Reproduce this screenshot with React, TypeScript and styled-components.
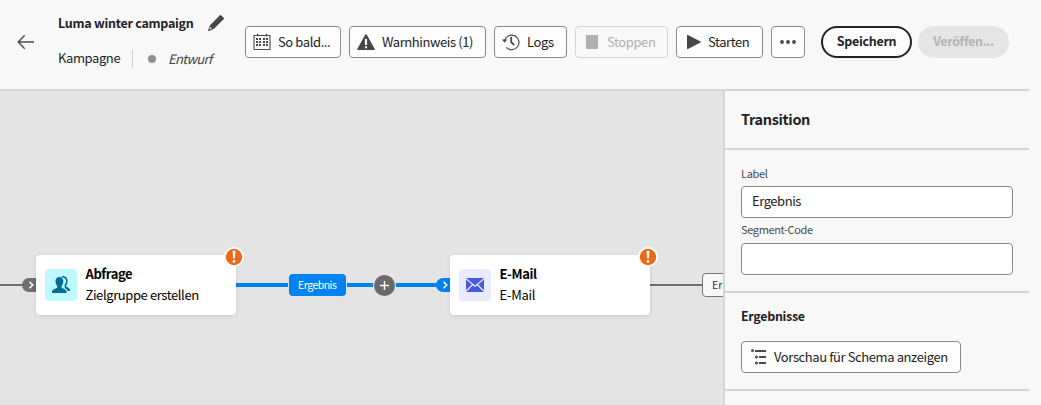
import React from "react";
import styled, { createGlobalStyle, css } from "styled-components";

const GlobalStyle = createGlobalStyle`
  * { box-sizing: border-box; }
  body {
    margin: 0;
    background: #f8f8f8;
    color: #222;
    font-family: "Noto Sans CJK SC", "Noto Sans", sans-serif;
    font-size: 13px;
    line-height: 18px;
    overflow: hidden;
  }
  button, input { font: inherit; color: inherit; }
  svg { display: block; flex: none; }
`;

const Page = styled.div`
  display: flex;
  flex-direction: column;
  width: 1029px;
  height: 405px;
`;

const Header = styled.header`
  display: flex;
  height: 91px;
  border-bottom: 2px solid #d5d5d5;
`;

const BackButton = styled.button`
  width: 58px;
  height: 84px;
  padding: 0 0 0 17px;
  border: 0;
  background: none;
`;

const TitleBlock = styled.div`
  width: 187px;
  padding-top: 14px;
`;

const TitleRow = styled.div`
  display: flex;
  align-items: center;
  gap: 14px;
  height: 18px;
`;

const Title = styled.h1`
  margin: 0;
  font-size: 12.5px;
  font-weight: 700;
  line-height: 18px;
  white-space: nowrap;
`;

const MetaRow = styled.div`
  display: flex;
  align-items: center;
  height: 18px;
  margin-top: 18px;
`;

const Kind = styled.span`
  width: 75px;
  height: 18px;
  line-height: 16px;
  border-right: 1px solid #d0d0d0;
`;

const StatusDot = styled.i`
  width: 8px;
  height: 8px;
  margin: 0 12px 0 15px;
  border-radius: 50%;
  background: #8e8e8e;
`;

const Status = styled.em`
  color: #444;
`;

const Toolbar = styled.div`
  display: flex;
  gap: 8px;
  padding-top: 26px;
`;

const ToolButton = styled.button<{ $width: number; $pad?: number; $gap?: number }>`
  display: flex;
  align-items: center;
  gap: ${(p) => p.$gap ?? 7}px;
  width: ${(p) => p.$width}px;
  height: 32px;
  padding: 0 0 0 ${(p) => p.$pad ?? 7}px;
  border: 1px solid #8a8a8a;
  border-radius: 4px;
  background: #fdfdfd;
  white-space: nowrap;
  color: #222;
  &:disabled {
    border-color: #d3d3d3;
    background: #f8f8f8;
    color: #b1b1b1;
  }
`;

const Pills = styled.div`
  display: flex;
  gap: 6px;
  margin-left: 8px;
`;

const PillButton = styled.button`
  width: 91px;
  height: 32px;
  padding: 0 0 3px;
  border: 2px solid #222;
  border-radius: 16px;
  background: #fdfdfd;
  font-size: 12.5px;
  font-weight: 700;
  white-space: nowrap;
  &:disabled {
    border-color: #e5e5e5;
    background: #e5e5e5;
    color: #b3b3b3;
  }
`;

const Body = styled.div`
  display: flex;
  flex: 1;
  min-height: 0;
`;

const Canvas = styled.main`
  position: relative;
  width: 723px;
  overflow: hidden;
  background: #e4e4e4;
`;

const Edge = styled.div<{ $x: number; $width: number; $active?: boolean }>`
  position: absolute;
  left: ${(p) => p.$x}px;
  width: ${(p) => p.$width}px;
  ${(p) =>
    p.$active
      ? css`top: 192px; height: 4px; background: #0083f2;`
      : css`top: 193px; height: 2px; background: #6e6e6e;`}
`;

const Port = styled.div<{ $x: number; $active?: boolean }>`
  position: absolute;
  left: ${(p) => p.$x}px;
  top: 187px;
  width: 16px;
  height: 14px;
  padding: 3px 0 0 5px;
  border-radius: 7px 0 0 7px;
  background: ${(p) => (p.$active ? "#0083f2" : "#6e6e6e")};
`;

const Node = styled.div<{ $x: number }>`
  position: absolute;
  left: ${(p) => p.$x}px;
  top: 164px;
  display: flex;
  gap: 8.5px;
  width: 200px;
  height: 60px;
  padding: 9px 9px 0;
  border-radius: 4px;
  background: #fff;
  box-shadow: 0 1px 4px rgba(0, 0, 0, 0.12);
  color: #000;
`;

const NodeIcon = styled.div<{ $tint: string }>`
  display: grid;
  place-items: center;
  width: 32px;
  height: 32px;
  margin-top: 5px;
  border-radius: 4px;
  background: ${(p) => p.$tint};
`;

const NodeText = styled.div`
  display: flex;
  flex-direction: column;
  gap: 3px;
  padding-top: 1px;
  white-space: nowrap;
`;

const AlertBadge = styled.div`
  position: absolute;
  top: -8px;
  right: -8px;
`;

const EdgeLabel = styled.div<{ $x: number; $width: number; $active?: boolean }>`
  position: absolute;
  left: ${(p) => p.$x}px;
  top: ${(p) => (p.$active ? 183 : 182)}px;
  width: ${(p) => p.$width}px;
  height: ${(p) => (p.$active ? 22 : 24)}px;
  padding-left: 9px;
  border-radius: 4px;
  font-size: 10.5px;
  line-height: 22px;
  ${(p) =>
    p.$active
      ? css`background: #0083f2; color: #fff; box-shadow: 0 0 0 1px #e4e4e4;`
      : css`background: #f8f8f8; color: #333; border: 1px solid #767676;`}
`;

const AddButton = styled.button`
  position: absolute;
  left: 374px;
  top: 184px;
  width: 21px;
  height: 21px;
  display: grid;
  place-items: center;
  padding: 0;
  border: 0;
  border-radius: 50%;
  background: #6a6a6a;
  box-shadow: 0 0 0 1px #e4e4e4;
`;

const Panel = styled.aside`
  width: 306px;
  border-left: 2px solid #d5d5d5;
`;

const Section = styled.section<{ $height: number }>`
  display: flex;
  flex-direction: column;
  height: ${(p) => p.$height}px;
  padding: 0 16px;
  border-bottom: 2px solid #d5d5d5;
`;

const PanelTitle = styled.h2`
  margin: 18px 0 0;
  font-size: 14.5px;
  font-weight: 700;
  line-height: 20px;
`;

const SectionTitle = styled.h3`
  margin: 14px 0 16px;
  font-size: 12.5px;
  font-weight: 700;
  line-height: 18px;
`;

const Fields = styled.div`
  display: flex;
  flex-direction: column;
  gap: 3px;
  padding-top: 15px;
`;

const Field = styled.label`
  display: flex;
  flex-direction: column;
  color: #4b4b4b;
  font-size: 11px;
  line-height: 16px;
  & + & > input { margin-top: 6px; }
`;

const TextInput = styled.input`
  width: 272px;
  height: 32px;
  margin-top: 5px;
  padding: 0 10px 3px;
  border: 1px solid #8a8a8a;
  border-radius: 4px;
  background: #fff;
  color: #222;
  font-size: 13px;
  letter-spacing: -0.45px;
  outline: none;
`;

const Text = styled.span<{ $track?: number }>`
  letter-spacing: ${(p) => p.$track ?? -0.4}px;
`;

const Chevron = () => (
  <svg width="8" height="8" viewBox="0 0 8 8" fill="none" stroke="#fff" strokeWidth="1.6">
    <path d="M2.5 .8 5.7 4 2.5 7.2" />
  </svg>
);

const Alert = () => (
  <AlertBadge>
    <svg width="20" height="20" viewBox="0 0 20 20">
      <circle cx="10" cy="10" r="10" fill="#fff" />
      <circle cx="10" cy="10" r="8.2" fill="#eb6a17" />
      <path d="M8.6 3.8h2.8l-.4 7.700H9z" fill="#fff" />
      <circle cx="10" cy="14.4" r="1.4" fill="#fff" />
    </svg>
  </AlertBadge>
);

const CalendarIcon = () => (
  <svg width="18" height="18" viewBox="0 0 18 18" fill="#4b4b4b">
    <path d="M4 1h1v2H4zM13 1h1v2h-1z" stroke="#4b4b4b" strokeWidth=".5" />
    <path d="M1 2.500h16v14H1z" fill="none" stroke="#4b4b4b" strokeWidth="1.1" />
    {[5, 8, 11].map((y) =>
      [3, 6, 10, 13].map((x) => <rect key={`${x}-${y}`} x={x} y={y} width="2" height="2" />)
    )}
  </svg>
);

const WarningIcon = () => (
  <svg width="18" height="18" viewBox="0 0 18 18">
    <path d="M9 1.2c.4 0 .6.2.8.5l7.8 14c.4.7 0 1.3-.7 1.3H1.1c-.7 0-1.1-.6-.7-1.3l7.8-14c.2-.3.4-.5.8-.5z" fill="#464646" />
    <path d="M7.9 6h2.2v6H7.9zM7.9 13.2h2.2v2.1H7.9z" fill="#fdfdfd" />
  </svg>
);

const HistoryIcon = () => (
  <svg width="18" height="18" viewBox="0 0 18 18" fill="none" stroke="#4b4b4b">
    <path d="M2.600 7.500A7.300 7.300 0 1 1 4.300 14.400" strokeWidth="1.2" />
    <path d="M0 6.600h5.200L2.500 9.800z" fill="#4b4b4b" stroke="none" />
    <path d="M9.200 4v5.200l2.900 2.800" strokeWidth="1.8" />
  </svg>
);

const SchemaIcon = () => (
  <svg width="18" height="18" viewBox="0 0 18 18" fill="#4b4b4b">
    <circle cx="2.5" cy="2.500" r="1.5" />
    <circle cx="6.5" cy="9" r="1.5" />
    <circle cx="6.5" cy="15" r="1.5" />
    <path d="M5 2h11v2H5zM9 8h7v2H9zM9 14h7v2H9z" />
  </svg>
);

const PeopleIcon = () => (
  <svg width="20" height="18" viewBox="0 0 20 18" fill="#026b98">
    <path d="M8.400 1c2.500 0 3.900 1.700 3.900 4.200 0 2-.8 3.600-1.700 4.600v1.600c.2.9 4.700 1.600 5 4 .1.700 0 1.600-.3 1.600H1.300c-.4 0-.4-.9-.3-1.500.4-2.500 5-3.200 5.200-4.100V9.800C5.300 8.800 4.500 7.200 4.500 5.200 4.500 2.700 5.900 1 8.400 1z" />
    <path d="M10.800.9c3-.6 5.100 1.100 5.100 4 0 1.900-.7 3.200-1.600 4.200v1.400c.3.900 3.800 1.900 4.300 4" fill="none" stroke="#026b98" strokeWidth="1.500" />
    <path d="M14.200 11.200c2.500.9 4.300 1.600 4.700 3.800h-2.100c-.5-1.500-1.700-2.200-3.500-2.900z" />
  </svg>
);

const MailIcon = () => (
  <svg width="18" height="14" viewBox="0 0 18 14">
    <path d="M0 0h18v14H0z" fill="#4759df" />
    <path d="M0 .8 9 8.3 18 .8M0 13.2l6.500-6.400M18 13.200l-6.500-6.400" fill="none" stroke="#ebebff" strokeWidth="1.200" />
  </svg>
);

const PencilIcon = () => (
  <svg width="16" height="16" viewBox="0 0 16 16" fill="#464646">
    <path d="M11.700.4c.5-.5 1-.5 1.500 0l2.400 2.400c.5.500.5 1 0 1.500L6 13.700l-5 2.200c-.6.200-1-.2-.8-.8l2-5z" />
    <path d="m2.500 12 1.500 1.500-2.300.9-.2-.2z" fill="#f8f8f8" />
  </svg>
);

export default function App() {
  return (
    <>
      <GlobalStyle />
      <Page>
        <Header>
          <BackButton aria-label="Zurück">
            <svg width="18" height="16" viewBox="0 0 18 16" fill="none" stroke="#4b4b4b" strokeWidth="1.4">
              <path d="M17 8H1.400M7.700 1.300 1.200 8l6.500 6.700" />
            </svg>
          </BackButton>
          <TitleBlock>
            <TitleRow>
              <Title><Text $track={-0.27}>Luma winter campaign</Text></Title>
              <PencilIcon />
            </TitleRow>
            <MetaRow>
              <Kind><Text>Kampagne</Text></Kind>
              <StatusDot />
              <Status><Text $track={-0.65}>Entwurf</Text></Status>
            </MetaRow>
          </TitleBlock>
          <Toolbar>
            <ToolButton $width={96}><CalendarIcon /><Text>So bald...</Text></ToolButton>
            <ToolButton $width={137}><WarningIcon /><Text>Warnhinweis (1)</Text></ToolButton>
            <ToolButton $width={73}><HistoryIcon /><Text>Logs</Text></ToolButton>
            <ToolButton $width={93} $pad={10} $gap={9} disabled>
              <svg width="12" height="14" viewBox="0 0 12 14"><path d="M0 0h12v14H0z" fill="#b1b1b1" /></svg>
              <Text>Stoppen</Text>
            </ToolButton>
            <ToolButton $width={87} $pad={10}>
              <svg width="14" height="16" viewBox="0 0 14 16"><path d="M0 1.500C0 .8.500.600 1 .900l12.500 6.600c.4.200.4.700 0 .9L1 15.100c-.5.300-1 .1-1-.5z" fill="#464646" /></svg>
              <Text>Starten</Text>
            </ToolButton>
            <ToolButton $width={34} $pad={8} aria-label="Mehr">
              <svg width="16" height="4" viewBox="0 0 16 4" fill="#464646">
                <circle cx="2" cy="2" r="1.900" /><circle cx="8" cy="2" r="1.900" /><circle cx="14" cy="2" r="1.900" />
              </svg>
            </ToolButton>
            <Pills>
              <PillButton><Text $track={-0.3}>Speichern</Text></PillButton>
              <PillButton disabled><Text $track={-0.35}>Veröffen...</Text></PillButton>
            </Pills>
          </Toolbar>
        </Header>
        <Body>
          <Canvas>
            <Edge $x={0} $width={24} />
            <Port $x={22}><Chevron /></Port>
            <Edge $x={236} $width={202} $active />
            <EdgeLabel $x={289} $width={57} $active><Text $track={-0.5}>Ergebnis</Text></EdgeLabel>
            <AddButton aria-label="Hinzufügen">
              <svg width="9" height="9" viewBox="0 0 9 9" stroke="#fff" strokeWidth="1.400"><path d="M4.500 0v9M0 4.500h9" /></svg>
            </AddButton>
            <Port $x={436} $active><Chevron /></Port>
            <Edge $x={650} $width={53} />
            <EdgeLabel $x={702} $width={58}><Text $track={0}>Er</Text></EdgeLabel>
            <Node $x={36}>
              <NodeIcon $tint="#c0f8ff"><PeopleIcon /></NodeIcon>
              <NodeText>
                <Text as="strong">Abfrage</Text>
                <Text>Zielgruppe erstellen</Text>
              </NodeText>
              <Alert />
            </Node>
            <Node $x={450}>
              <NodeIcon $tint="#ebebff"><MailIcon /></NodeIcon>
              <NodeText>
                <Text as="strong">E-Mail</Text>
                <Text $track={-0.25}>E-Mail</Text>
              </NodeText>
              <Alert />
            </Node>
          </Canvas>
          <Panel>
            <Section $height={59}><PanelTitle><Text $track={-0.35}>Transition</Text></PanelTitle></Section>
            <Section $height={143}>
              <Fields>
                <Field><Text $track={-0.3}>Label</Text><TextInput defaultValue="Ergebnis" /></Field>
                <Field><Text $track={-0.35}>Segment-Code</Text><TextInput /></Field>
              </Fields>
            </Section>
            <Section $height={98}>
              <SectionTitle><Text $track={-0.33}>Ergebnisse</Text></SectionTitle>
              <ToolButton $width={220} $pad={8} $gap={6}><SchemaIcon /><Text>Vorschau für Schema anzeigen</Text></ToolButton>
            </Section>
          </Panel>
        </Body>
      </Page>
    </>
  );
}
